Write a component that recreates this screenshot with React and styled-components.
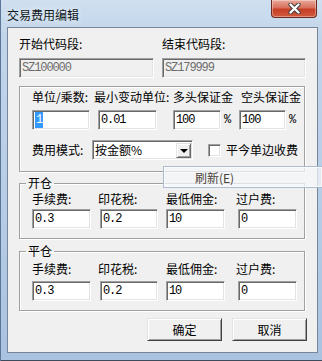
import styled, { createGlobalStyle } from "styled-components";

const GlobalStyle = createGlobalStyle`
  html, body {
    margin: 0;
    padding: 0;
    background: #ffffff;
  }
  body {
    font-family: "Noto Sans CJK SC", "Liberation Sans", sans-serif;
    font-size: 12px;
    color: #000;
  }
`;

const Window = styled.div`
  position: relative;
  width: 322px;
  height: 361px;
  box-sizing: border-box;
  overflow: hidden;
  padding: 0 4px 8px 7px;
  display: flex;
  flex-direction: column;
  background: linear-gradient(180deg, #cfdff0 0%, #c1d5ea 10%, #b6cce6 60%, #a9c2e0 100%);
  box-shadow: inset 1px 0 0 #5d7596, inset 0 -1px 0 #3e4b5d;
`;

const TitleBar = styled.div`
  height: 27px;
  display: flex;
  align-items: flex-start;
  flex-shrink: 0;
`;

const Title = styled.div`
  margin-top: 8px;
  line-height: 14px;
  font-size: 12px;
  color: #101820;
  text-shadow: 0 0 6px rgba(255, 255, 255, 0.9);
`;

const CloseButton = styled.div`
  margin-left: auto;
  margin-right: 1px;
  width: 46px;
  height: 18px;
  box-sizing: border-box;
  border: 1px solid #6e2a1f;
  border-top: none;
  border-radius: 0 0 4px 4px;
  background: linear-gradient(180deg, #e9a99b 0%, #d8705c 45%, #c63f26 55%, #d15a3e 100%);
  box-shadow: inset 0 0 0 1px rgba(255, 255, 255, 0.35);
  display: flex;
  align-items: center;
  justify-content: center;
`;

const Client = styled.div`
  flex: 1;
  background: #f0f0f0;
  border: 1px solid #75869b;
  padding: 9px 10px 0 11px;
  display: flex;
  flex-direction: column;
  align-items: flex-start;
`;

const TopFields = styled.div`
  display: flex;
  gap: 8px;
`;

const Field = styled.div`
  display: flex;
  flex-direction: column;
`;

const Label = styled.span`
  display: block;
  line-height: 14px;
  height: 14px;
  white-space: nowrap;
  width: ${(p) => (p.$w ? `${p.$w}px` : "auto")};
  flex-shrink: 0;
`;

const TextBox = styled.div`
  box-sizing: border-box;
  width: ${(p) => p.$w}px;
  height: 20px;
  margin-top: ${(p) => p.$mt || 0}px;
  flex-shrink: 0;
  border: 1px solid;
  border-color: #a0a0a0 #ffffff #ffffff #a0a0a0;
  box-shadow: inset 1px 1px 0 #696969, inset -1px -1px 0 #e3e3e3;
  background: ${(p) => (p.$disabled ? "#f0f0f0" : "#ffffff")};
  color: ${(p) => (p.$disabled ? "#6d6d6d" : "#000")};
  padding: 0 2px 0 2px;
  display: flex;
  align-items: center;
  font-family: "Liberation Mono", monospace;
  font-size: 12px;
  letter-spacing: -1.1px;
  white-space: nowrap;
`;

const Selected = styled.span`
  background: #3399ff;
  color: #fff;
  height: 16px;
  display: inline-flex;
  align-items: center;
  padding: 0 1px 0 1px;
`;

const Group = styled.fieldset`
  box-sizing: border-box;
  width: 286px;
  margin: ${(p) => p.$mt}px 0 0 0;
  padding: ${(p) => p.$pt}px 0 ${(p) => p.$pb}px 12px;
  border: 1px solid #a0a0a0;
  box-shadow: inset 1px 1px 0 #ffffff, 1px 1px 0 #ffffff;
  min-width: 0;
`;

const Legend = styled.legend`
  padding: 0 2px;
  margin-left: -6px;
  line-height: 14px;
  font-size: 12px;
`;

const Row = styled.div`
  display: flex;
  align-items: center;
  margin-top: ${(p) => p.$mt || 0}px;
`;

const Percent = styled.span`
  box-sizing: border-box;
  width: 18px;
  padding-left: 3px;
  font-family: "Liberation Mono", monospace;
  font-size: 12px;
  flex-shrink: 0;
`;

const Gap = styled.span`
  width: ${(p) => p.$w}px;
  flex-shrink: 0;
`;

const Select = styled.div`
  box-sizing: border-box;
  width: 101px;
  height: 20px;
  border: 1px solid;
  border-color: #a0a0a0 #ffffff #ffffff #a0a0a0;
  box-shadow: inset 1px 1px 0 #696969, inset -1px -1px 0 #e3e3e3;
  background: #fff;
  display: flex;
  align-items: center;
  padding: 0 1px 0 2px;
  flex-shrink: 0;
`;

const SelectText = styled.span`
  flex: 1;
  line-height: 14px;
  white-space: nowrap;
`;

const DropButton = styled.div`
  box-sizing: border-box;
  width: 15px;
  height: 15px;
  background: #f0f0f0;
  border: 1px solid;
  border-color: #e3e3e3 #696969 #696969 #e3e3e3;
  box-shadow: inset 1px 1px 0 #fff, inset -1px -1px 0 #a0a0a0;
  display: flex;
  align-items: center;
  justify-content: center;
`;

const Arrow = styled.span`
  width: 0;
  height: 0;
  border-left: 4px solid transparent;
  border-right: 4px solid transparent;
  border-top: 4px solid #000;
  margin-top: 1px;
`;

const CheckBox = styled.span`
  box-sizing: border-box;
  width: 13px;
  height: 13px;
  margin-left: 15px;
  border: 1px solid;
  border-color: #a0a0a0 #ffffff #ffffff #a0a0a0;
  box-shadow: inset 1px 1px 0 #696969, inset -1px -1px 0 #e3e3e3;
  background: #fff;
  flex-shrink: 0;
`;

const CheckLabel = styled.span`
  margin-left: 5px;
  line-height: 14px;
  white-space: nowrap;
`;

const Buttons = styled.div`
  align-self: stretch;
  display: flex;
  justify-content: flex-end;
  gap: 10px;
  margin-top: 7px;
`;

const Button = styled.div`
  box-sizing: border-box;
  width: 75px;
  height: 23px;
  background: #f0f0f0;
  border: 1px solid;
  border-color: #e3e3e3 #404040 #404040 #e3e3e3;
  box-shadow: inset 1px 1px 0 #ffffff, inset -1px -1px 0 #a0a0a0;
  display: flex;
  align-items: center;
  justify-content: center;
  font-size: 12px;
`;

const PopupMenu = styled.div`
  position: absolute;
  left: 163px;
  top: 166px;
  width: 160px;
  height: 22px;
  box-sizing: border-box;
  border: 1px solid rgba(150, 168, 194, 0.75);
  background: rgba(244, 246, 250, 0.72);
  box-shadow: inset 0 0 0 1px rgba(255, 255, 255, 0.6);
  display: flex;
  align-items: center;
  padding-left: 31px;
  color: #4a4238;
  font-size: 12px;
`;

const g1Labels = [
  { text: "单位/乘数:", w: 62 },
  { text: "最小变动单位:", w: 79 },
  { text: "多头保证金", w: 68 },
  { text: "空头保证金" },
];

const feeLabels = [
  { text: "手续费:", w: 66 },
  { text: "印花税:", w: 68 },
  { text: "最低佣金:", w: 70 },
  { text: "过户费:" },
];

const FeeGroup = ({ title, values, mt, pt, inputGap }) => (
  <Group $mt={mt} $pt={pt} $pb={9}>
    <Legend>{title}</Legend>
    <Row>
      {feeLabels.map((l) => (
        <Label key={l.text} $w={l.w}>
          {l.text}
        </Label>
      ))}
    </Row>
    <Row $mt={inputGap}>
      <TextBox $w={59}>{values[0]}</TextBox>
      <Gap $w={9} />
      <TextBox $w={58}>{values[1]}</TextBox>
      <Gap $w={8} />
      <TextBox $w={59}>{values[2]}</TextBox>
      <Gap $w={13} />
      <TextBox $w={59}>{values[3]}</TextBox>
    </Row>
  </Group>
);

export default function App() {
  return (
    <>
      <GlobalStyle />
      <Window>
        <TitleBar>
          <Title>交易费用编辑</Title>
          <CloseButton>
            <svg width="13" height="11" viewBox="0 0 13 11">
              <path d="M2.5 1.5 L10.5 9.5 M10.5 1.5 L2.5 9.5" stroke="#3b3b3b" strokeWidth="4.2" strokeLinecap="round" />
              <path d="M2.5 1.5 L10.5 9.5 M10.5 1.5 L2.5 9.5" stroke="#ffffff" strokeWidth="2.4" strokeLinecap="round" />
            </svg>
          </CloseButton>
        </TitleBar>
        <Client>
          <TopFields>
            <Field>
              <Label>开始代码段:</Label>
              <TextBox $w={135} $mt={7} $disabled>
                SZ100000
              </TextBox>
            </Field>
            <Field>
              <Label>结束代码段:</Label>
              <TextBox $w={144} $mt={7} $disabled>
                SZ179999
              </TextBox>
            </Field>
          </TopFields>

          <Group $mt={8} $pt={3} $pb={11}>
            <Row>
              {g1Labels.map((l) => (
                <Label key={l.text} $w={l.w}>
                  {l.text}
                </Label>
              ))}
            </Row>
            <Row $mt={6}>
              <TextBox $w={58}>
                <Selected>1</Selected>
              </TextBox>
              <Gap $w={8} />
              <TextBox $w={59}>0.01</TextBox>
              <Gap $w={16} />
              <TextBox $w={48}>100</TextBox>
              <Percent>%</Percent>
              <TextBox $w={47}>100</TextBox>
              <Percent>%</Percent>
            </Row>
            <Row $mt={10}>
              <Label $w={60}>费用模式:</Label>
              <Select>
                <SelectText>按金额%</SelectText>
                <DropButton>
                  <Arrow />
                </DropButton>
              </Select>
              <CheckBox />
              <CheckLabel>平今单边收费</CheckLabel>
            </Row>
          </Group>

          <FeeGroup title="开仓" values={["0.3", "0.2", "10", "0"]} mt={4} pt={2} inputGap={3} />
          <FeeGroup title="平仓" values={["0.3", "0.2", "10", "0"]} mt={5} pt={4} inputGap={5} />

          <Buttons>
            <Button>确定</Button>
            <Button>取消</Button>
          </Buttons>
        </Client>
        <PopupMenu>刷新(E)</PopupMenu>
      </Window>
    </>
  );
}
